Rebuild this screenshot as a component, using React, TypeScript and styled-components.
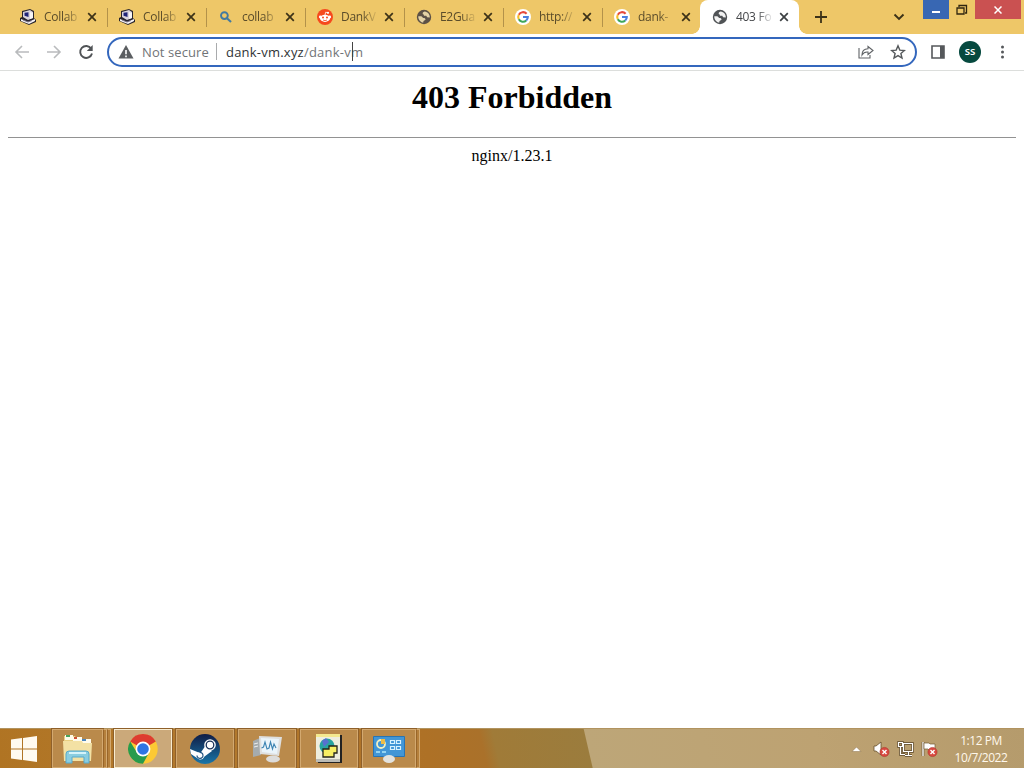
import React from "react";
import styled, { createGlobalStyle } from "styled-components";

const GlobalStyle = createGlobalStyle`
  * {
    box-sizing: border-box;
  }
  body {
    margin: 0;
    background: #fff;
    overflow: hidden;
  }
  svg {
    display: block;
    flex: none;
  }
`;

const uiFont = `"Open Sans", "Noto Sans", sans-serif`;

const Screen = styled.div`
  display: flex;
  flex-direction: column;
  width: 1024px;
  height: 768px;
  font-family: ${uiFont};
`;

const TabStrip = styled.div`
  display: flex;
  height: 34px;
  padding-left: 8px;
  background: #eec768;
`;

const Tab = styled.div<{ $active?: boolean }>`
  position: relative;
  display: flex;
  align-items: center;
  flex: none;
  width: 99px;
  height: 34px;
  margin-left: ${(p) => (p.$active ? -1 : 0)}px;
  padding: 0 9px 0 12px;
  border-radius: 8px 8px 0 0;
  background: ${(p) => (p.$active ? "#fff" : "transparent")};

  &::before,
  &::after {
    content: "";
    display: ${(p) => (p.$active ? "block" : "none")};
    position: absolute;
    bottom: 0;
    width: 8px;
    height: 8px;
  }
  &::before {
    left: -8px;
    background: radial-gradient(circle at 0 0, transparent 7.5px, #fff 8px);
  }
  &::after {
    right: -8px;
    background: radial-gradient(circle at 100% 0, transparent 7.5px, #fff 8px);
  }
`;

const TabTitle = styled.span<{ $active?: boolean }>`
  width: 35px;
  margin: 0 8px;
  white-space: nowrap;
  font-size: 12px;
  line-height: 16px;
  letter-spacing: -0.3px;
  color: ${(p) => (p.$active ? "#45474a" : "#5a4c2a")};
  mask-image: linear-gradient(to right, #000 60%, rgba(0, 0, 0, 0.15) 100%);
`;

const TabDivider = styled.div`
  align-self: center;
  width: 1px;
  height: 19px;
  margin: 0 -1px 0 0;
  background: #b3924a;
`;

const NewTab = styled.div`
  display: flex;
  align-items: center;
  width: 92px;
  padding-left: 16px;
`;

const WindowButtons = styled.div`
  display: flex;
  align-items: flex-start;
  margin-left: auto;
  padding-right: 3px;
`;

const WindowButton = styled.div<{ $width: number; $color?: string }>`
  display: flex;
  align-items: center;
  justify-content: center;
  width: ${(p) => p.$width}px;
  height: 19px;
  background: ${(p) => p.$color || "transparent"};
`;

const TabSearch = styled.div`
  display: flex;
  align-items: center;
  height: 34px;
  padding-right: 18px;
`;

const Toolbar = styled.div`
  display: flex;
  align-items: center;
  height: 37px;
  padding: 0 12px 1px 14px;
  border-bottom: 1px solid #dcdedc;
  background: #fff;
`;

const NavButtons = styled.div`
  display: flex;
  flex: none;
  gap: 16px;
  width: 93px;
`;

const Omnibox = styled.div`
  display: flex;
  align-items: center;
  flex: none;
  width: 810px;
  height: 30px;
  padding: 0 9px 0 9px;
  border: 2px solid #3467bd;
  border-radius: 15px;
  color: #717477;
`;

const Security = styled.span`
  width: 68px;
  margin-left: 8px;
  white-space: nowrap;
  font-size: 13px;
  letter-spacing: 0.1px;
`;

const OmniDivider = styled.div`
  width: 1px;
  height: 17px;
  margin: 0 9px 0 6px;
  background: #a9abad;
`;

const Url = styled.span`
  position: relative;
  flex: 1;
  white-space: nowrap;
  font-size: 13px;
  letter-spacing: 0.22px;

  b {
    font-weight: 400;
    color: #303336;
  }
`;

const Caret = styled.i`
  position: absolute;
  left: 126px;
  top: -1px;
  width: 1px;
  height: 19px;
  background: #444;
`;

const OmniActions = styled.div`
  display: flex;
  gap: 16px;
`;

const ToolbarActions = styled.div`
  display: flex;
  align-items: center;
  gap: 13px;
  margin-left: 13px;
`;

const Avatar = styled.div`
  width: 22px;
  height: 22px;
  border-radius: 50%;
  background: #06493f;
  color: #fff;
  font: 600 11px/20px ${uiFont};
  text-align: center;
`;

const Page = styled.main`
  flex: 1;
  padding: 0 8px;
  background: #fff;
  font-family: "Liberation Serif", "Times New Roman", serif;
  font-size: 16px;
  text-align: center;
  color: #000;

  h1 {
    margin: 8px 0 21px;
    font-size: 32px;
    line-height: 37px;
  }
  hr {
    height: 1px;
    margin: 0 0 9px;
    border: 0;
    background: #929292;
  }
  div {
    line-height: 18px;
  }
`;

const Taskbar = styled.footer`
  display: flex;
  align-items: center;
  height: 40px;
  border-top: 1px solid #b1935f;
  background: linear-gradient(
    77deg,
    #b07423 0,
    #b37a2e 200px,
    #ae7126 420px,
    #aa712a 475px,
    #a07b38 488px,
    #9b7c3d 577px,
    #bda678 578px,
    #bda272 800px,
    #b59b6c 100%
  );
`;

const StartButton = styled.div`
  flex: none;
  width: 52px;
  padding-left: 10px;
`;

const TaskButton = styled.div<{ $width?: number; $active?: boolean }>`
  display: flex;
  align-items: center;
  justify-content: center;
  flex: none;
  width: ${(p) => p.$width || 58}px;
  height: 39px;
  margin-right: 4px;
  border: 1px solid ${(p) => (p.$active ? "#f8ecd0" : "#d3a970")};
  background: ${(p) => (p.$active ? "#cba97a" : "#ba8a4b")};
  box-shadow: 0 0 0 1px #8f602a;
`;

const StackEdge = styled.div<{ $last?: boolean }>`
  flex: none;
  width: 4px;
  height: 39px;
  margin-left: ${(p) => (p.$last ? 0 : -4)}px;
  margin-right: ${(p) => (p.$last ? 3 : 0)}px;
  border: 1px solid #d3a970;
  border-left-color: #99662a;
  background: #b5803c;
`;

const Tray = styled.div`
  display: flex;
  align-items: center;
  gap: 7px;
  margin-left: auto;
  padding-top: 1px;
`;

const TrayArrow = styled.div`
  margin-right: 4px;
`;

const Clock = styled.div`
  width: 79px;
  padding-right: 7px;
  font-size: 12px;
  line-height: 17px;
  letter-spacing: -0.45px;
  text-align: center;
  color: #fff8ec;
`;

const Globe = ({ color, land }: { color: string; land: string }) => (
  <svg width="16" height="16" viewBox="0 0 16 16">
    <circle cx="8" cy="8" r="7.2" fill={color} />
    <path d="M8.6 2.5C7 3 6.3 4 6.9 5.2 8 5.2 8.2 6 7.8 6.8h2.500l.8 1.500 2.700.2c.3-2.900-1.900-5.700-5.200-6zM2.300 7.200c-.2 3.300 2 6 5 6.400l.2-1.500 2-1.300c.2-1.400-1-1.800-2.300-1.700L5.400 7.300z" fill={land} />
  </svg>
);

const RetroPc = () => (
  <svg width="16" height="16" viewBox="0 0 16 16">
    <path d="M2 2 10 0l4 2v7l2 2v2l-7 3-9-4V9l2-1z" fill="#29252c" />
    <path d="m3 3 7-2 3 2v6L8 11 3 8z" fill="#d9d4dd" />
    <path d="m4.500 3.800 4-.5v4.700L4.500 6.700z" fill="#202478" />
    <path d="m10 3 3 1v5l-3 1zM1 10l7 3 7-3v2l-6 3-8-3z" fill="#f7f4f5" />
    <path d="m3 11 5 2 4-1.500" fill="none" stroke="#7b748c" />
  </svg>
);

const SearchGlass = () => (
  <svg width="16" height="16" viewBox="0 0 16 16">
    <circle cx="6.400" cy="6.600" r="3.400" fill="none" stroke="#427aa0" strokeWidth="1.900" />
    <path d="m9 9.300 4 3.800" stroke="#427aa0" strokeWidth="2.100" />
  </svg>
);

const Reddit = () => (
  <svg width="16" height="16" viewBox="0 0 16 16">
    <circle cx="8" cy="8" r="8" fill="#f6491d" />
    <ellipse cx="8" cy="9.300" rx="5" ry="3.600" fill="#fff" />
    <circle cx="3.300" cy="8" r="1.400" fill="#fff" />
    <circle cx="12.700" cy="8" r="1.400" fill="#fff" />
    <circle cx="11" cy="3.800" r="1.100" fill="#fff" />
    <path d="m8 6 .7-2.800 2.300.6" fill="none" stroke="#fff" strokeWidth=".8" />
    <circle cx="6" cy="8.600" r="1" fill="#f6491d" />
    <circle cx="10" cy="8.600" r="1" fill="#f6491d" />
    <path d="M6 11q2 1.300 4 0" fill="none" stroke="#f6491d" strokeWidth=".8" />
  </svg>
);

const GoogleG = () => (
  <svg width="16" height="16" viewBox="0 0 16 16">
    <circle cx="8" cy="8" r="8" fill="#fff" />
    <g fill="none" strokeWidth="2.100">
      <path d="M11.600 4.700A4.800 4.800 0 0 0 3.800 5.700" stroke="#e64a3c" />
      <path d="M3.800 5.700a4.800 4.800 0 0 0 0 4.600" stroke="#f6bd2c" />
      <path d="M3.800 10.300a4.800 4.800 0 0 0 7.400 1.200" stroke="#3fa75a" />
      <path d="M11.200 11.500A4.800 4.800 0 0 0 12.800 8H8" stroke="#4a7fe0" />
    </g>
  </svg>
);

const CloseIcon = ({ color = "#3c3218" }: { color?: string }) => (
  <svg width="10" height="10" viewBox="0 0 10 10">
    <path d="m1.200 1.200 7.600 7.600m0-7.600L1.200 8.800" stroke={color} strokeWidth="1.700" />
  </svg>
);

const WindowsLogo = () => (
  <svg width="28" height="26" viewBox="0 0 28 26">
    <path d="M1 3.600 12 2v10.500H1zM13 1.900 27 0v12.500H13zM1 13.500h11V24L1 22.400zM13 13.500h14V26l-14-1.900z" fill="#fffaf0" />
  </svg>
);

const Explorer = () => (
  <svg width="32" height="32" viewBox="0 0 32 32">
    <path d="M2 3h11l2 3h14v22H2z" fill="#e8cf82" />
    <path d="M3 2h8v5H3zM11 4h9v4h-9zM20 6h9v4h-9z" fill="#fffbea" />
    <path d="M4 2h4v2H4z" fill="#49a35c" />
    <path d="M12 4h3v2h-3z" fill="#cf5035" />
    <path d="M20 6h4v2h-4z" fill="#4b85be" />
    <path d="M1 8h19l1 2h9l-1 18H2z" fill="#f3e1a4" />
    <path d="M4 30V21q0-3 3-3h17q3 0 3 3v9h-5v-6H10v6z" fill="#8acde0" stroke="#57a9cc" />
    <path d="M7 20h17" stroke="#d5f3fa" strokeWidth="2" />
  </svg>
);

const Chrome = () => (
  <svg width="30" height="30" viewBox="0 0 30 30">
    <circle cx="15" cy="15" r="14.700" fill="#fcc934" />
    <path d="M15 15 2.200 7.500a14.700 14.700 0 0 1 25.600 0z" fill="#de3c30" />
    <path d="M2.200 7.500A14.700 14.700 0 0 0 15 29.700l6.100-11.200L15 15 8.900 18.500z" fill="#289b4d" />
    <circle cx="15" cy="15" r="7.400" fill="#fff" />
    <circle cx="15" cy="15" r="5.800" fill="#2f75e3" />
  </svg>
);

const Steam = () => (
  <svg width="30" height="30" viewBox="0 0 30 30">
    <defs>
      <linearGradient id="steam" x1="0" y1="0" x2="0" y2="1">
        <stop offset="0" stopColor="#101c45" />
        <stop offset="1" stopColor="#1a76a8" />
      </linearGradient>
    </defs>
    <circle cx="15" cy="15" r="15" fill="url(#steam)" />
    <path d="m0 15 8 3.200h3l5-7.200 6 6-7.500 5.500q-2 4.500-6 2.500L1 20z" fill="#fff" />
    <circle cx="20" cy="11" r="5.800" fill="#fff" />
    <circle cx="20" cy="11" r="3.800" fill="none" stroke="#183158" strokeWidth="1.300" />
    <path d="M7 21.500a3 3 0 1 0 2.500-3" fill="none" stroke="#245582" strokeWidth="1.200" />
  </svg>
);

const TaskManager = () => (
  <svg width="32" height="30" viewBox="0 0 32 30">
    <path d="m2 7 7-3 1 17-8 2z" fill="#a5abad" />
    <path d="m3 10 4-1m-4 4 4-1" stroke="#eee" />
    <ellipse cx="22" cy="25" rx="7" ry="3.500" fill="#dddcda" />
    <path d="m8 2 23 1-3 19-19-2z" fill="#dedfdf" />
    <path d="m10 4 18 1-2 15-15-2z" fill="#eaf4fa" />
    <path d="m10.500 14 2-1 1.500-5 2 7 2-1 1.500-6 2 7 1.500-5 2 4" fill="none" stroke="#3c83b2" strokeWidth="1.100" />
  </svg>
);

const ServerApp = () => (
  <svg width="28" height="32" viewBox="0 0 28 32">
    <path d="M3 2h24v28H3z" fill="#222" />
    <path d="M1 1h24v28H1z" fill="#eeeede" />
    <path d="M1 1h24v3H1z" fill="#f4e98f" />
    <circle cx="12" cy="13" r="7.500" fill="#28a4a0" />
    <path d="m7 8 4-3 3 4-5 5z" fill="#5870d0" />
    <path d="M8 16h6v-3h8v7h-3v4H8z" fill="#f8ef64" stroke="#24251a" strokeWidth="1.300" />
    <path d="M1 26h24v3H1z" fill="#bcbcb6" />
  </svg>
);

const ControlPanel = () => (
  <svg width="32" height="28" viewBox="0 0 32 28">
    <path d="M.5 1.500h31v20H.5z" fill="#4296d6" stroke="#2774b4" />
    <circle cx="8" cy="9" r="4" fill="none" stroke="#f2f0c2" strokeWidth="1.800" />
    <path d="M8 9V4h4v5z" fill="#edbd48" />
    <path d="M17.500 5.500h4v3h-4zm6 0h4v3h-4zm-6 6h4v3h-4zm6 0h4v3h-4z" fill="none" stroke="#d8f2ff" strokeWidth="1.200" />
    <path d="M3 17h4m2 0h4" stroke="#94d4f1" strokeWidth="2" />
    <ellipse cx="16" cy="24" rx="6" ry="4" fill="#e3e3df" />
  </svg>
);

const Badge = () => (
  <g>
    <circle cx="11.500" cy="11" r="4.600" fill="#d84940" stroke="#a82c24" strokeWidth=".5" />
    <path d="m9.500 9 4 4m0-4-4 4" stroke="#fff" strokeWidth="1.400" />
  </g>
);

const tabs = [
  { title: "Collab", icon: <RetroPc /> },
  { title: "Collab", icon: <RetroPc /> },
  { title: "collab", icon: <SearchGlass /> },
  { title: "DankV", icon: <Reddit /> },
  { title: "E2Gua", icon: <Globe color="#5c5146" land="#e3d2a6" /> },
  { title: "http://", icon: <GoogleG /> },
  { title: "dank-", icon: <GoogleG /> },
  { title: "403 Fo", icon: <Globe color="#505356" land="#f2f2f2" />, active: true },
];

export default function App() {
  return (
    <Screen>
      <GlobalStyle />
      <TabStrip>
        {tabs.map((tab, i) => (
          <React.Fragment key={i}>
            <Tab $active={tab.active}>
              {tab.icon}
              <TabTitle $active={tab.active}>{tab.title}</TabTitle>
              <CloseIcon color={tab.active ? "#3c4043" : undefined} />
            </Tab>
            {i < 6 && <TabDivider />}
          </React.Fragment>
        ))}
        <NewTab>
          <svg width="12" height="12" viewBox="0 0 12 12">
            <path d="M6 0v12M0 6h12" stroke="#3c3218" strokeWidth="1.800" />
          </svg>
        </NewTab>
        <WindowButtons>
          <TabSearch>
            <svg width="12" height="8" viewBox="0 0 12 8">
              <path d="m1.500 1.500 4.500 4.500 4.500-4.500" fill="none" stroke="#3c3218" strokeWidth="1.900" />
            </svg>
          </TabSearch>
          <WindowButton $width={26} $color="#3867b3">
            <svg width="8" height="11" viewBox="0 0 8 11">
              <path d="M0 8h8" stroke="#fff" strokeWidth="2" />
            </svg>
          </WindowButton>
          <WindowButton $width={26}>
            <svg width="12" height="12" viewBox="0 0 12 12">
              <path d="M1 4h7v6H1zM3 3V1.500h7.500V9H9" fill="none" stroke="#30260f" strokeWidth="1.300" />
            </svg>
          </WindowButton>
          <WindowButton $width={46} $color="#ca5151">
            <svg width="8" height="8" viewBox="0 0 8 8">
              <path d="m.5.5 7 7m0-7-7 7" stroke="#fff" strokeWidth="1.500" />
            </svg>
          </WindowButton>
        </WindowButtons>
      </TabStrip>

      <Toolbar>
        <NavButtons>
          <svg width="16" height="16" viewBox="0 0 16 16">
            <path d="M15 8H2m6-6L2 8l6 6" fill="none" stroke="#b9bbbd" strokeWidth="1.600" />
          </svg>
          <svg width="16" height="16" viewBox="0 0 16 16">
            <path d="M1 8h13M8 2l6 6-6 6" fill="none" stroke="#b9bbbd" strokeWidth="1.600" />
          </svg>
          <svg width="16" height="16" viewBox="0 0 16 16">
            <path d="M13.200 4.600A6 6 0 1 0 14 9.500" fill="none" stroke="#505356" strokeWidth="1.900" />
            <path d="M14.700 1v6H8.800z" fill="#505356" />
          </svg>
        </NavButtons>
        <Omnibox>
          <svg width="16" height="14" viewBox="0 0 16 14">
            <path d="M8 0 15.500 13.500H.5z" fill="#5b5e61" />
            <path d="M8 5v4.200m0 1.300v1.700" stroke="#fff" strokeWidth="1.600" />
          </svg>
          <Security>Not secure</Security>
          <OmniDivider />
          <Url>
            <b>dank-vm.xyz</b>/dank-vm
            <Caret />
          </Url>
          <OmniActions>
            <svg width="16" height="16" viewBox="0 0 16 16">
              <path d="M1 4v10h11v-3M10 2.500l5 4-5 4V8Q6 7.500 4 11q0-6 6-6.200z" fill="none" stroke="#606366" strokeWidth="1.100" />
            </svg>
            <svg width="16" height="16" viewBox="0 0 16 16">
              <path d="m8 1.800 1.800 4.300 4.600.4-3.500 3 1.100 4.500L8 11.600 4 14l1.100-4.500-3.500-3 4.600-.4z" fill="none" stroke="#55585b" strokeWidth="1.400" />
            </svg>
          </OmniActions>
        </Omnibox>
        <ToolbarActions>
          <svg width="16" height="14" viewBox="0 0 16 14">
            <path d="M2 1h12v12H2z" fill="none" stroke="#55585b" strokeWidth="1.600" />
            <path d="M10 1h4v12h-4z" fill="#55585b" />
          </svg>
          <Avatar>ss</Avatar>
          <svg width="18" height="14" viewBox="0 0 18 14">
            <g fill="#55585b">
              <circle cx="8.500" cy="2" r="1.500" />
              <circle cx="8.500" cy="7" r="1.500" />
              <circle cx="8.500" cy="12" r="1.500" />
            </g>
          </svg>
        </ToolbarActions>
      </Toolbar>

      <Page>
        <h1>403 Forbidden</h1>
        <hr />
        <div>nginx/1.23.1</div>
      </Page>

      <Taskbar>
        <StartButton>
          <WindowsLogo />
        </StartButton>
        <TaskButton $width={51}>
          <Explorer />
        </TaskButton>
        <StackEdge />
        <StackEdge $last />
        <TaskButton $active>
          <Chrome />
        </TaskButton>
        <TaskButton>
          <Steam />
        </TaskButton>
        <TaskButton>
          <TaskManager />
        </TaskButton>
        <TaskButton>
          <ServerApp />
        </TaskButton>
        <TaskButton $width={54}>
          <ControlPanel />
        </TaskButton>
        <StackEdge />
        <Tray>
          <TrayArrow>
            <svg width="12" height="6" viewBox="0 0 12 6">
              <path d="m2 5.500 4.500-4.500L11 5.500z" fill="#fff" stroke="#8a7048" strokeWidth=".5" />
            </svg>
          </TrayArrow>
          <svg width="17" height="17" viewBox="0 0 17 17">
            <path d="M1 5h2l5-4v13l-5-4H1z" fill="#fff" stroke="#664f2c" strokeWidth=".8" />
            <Badge />
          </svg>
          <svg width="17" height="17" viewBox="0 0 17 17">
            <path d="M6.500 2.500h9v8h-9zM8 14.500h7M11.500 11v3M1.500 1.500h4v4h-4zm2 4v8H8" fill="none" stroke="#5c482a" strokeWidth="2.600" />
            <path d="M6.500 2.500h9v8h-9zM8 14.500h7M11.500 11v3M1.500 1.500h4v4h-4zm2 4v8H8" fill="none" stroke="#fff" strokeWidth="1.200" />
          </svg>
          <svg width="17" height="17" viewBox="0 0 17 17">
            <path d="M2 1v14" stroke="#5c482a" strokeWidth="2.600" />
            <path d="M2 1v14" stroke="#fff" strokeWidth="1.400" />
            <path d="M3 2h5l1 1h5v6H8L7 8H3z" fill="#fff" stroke="#745c38" strokeWidth=".7" />
            <Badge />
          </svg>
          <Clock>
            1:12 PM
            <br />
            10/7/2022
          </Clock>
        </Tray>
      </Taskbar>
    </Screen>
  );
}
